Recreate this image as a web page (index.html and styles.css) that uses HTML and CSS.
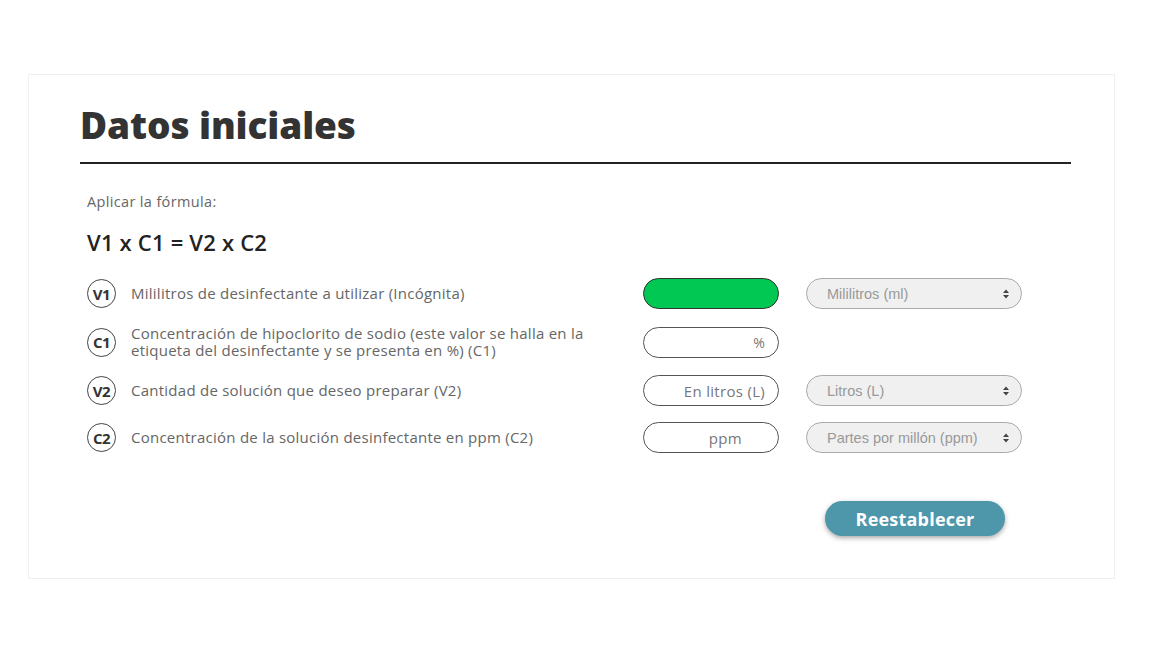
FILE: index.html
```html
<!DOCTYPE html>
<html lang="es">
<head>
<meta charset="utf-8">
<title>Datos iniciales</title>
<link rel="stylesheet" href="styles.css">
</head>
<body>
<main class="card">
  <h1 class="title">Datos iniciales</h1>
  <p class="intro">Aplicar la fórmula:</p>
  <p class="formula">V1 x C1 = V2 x C2</p>
  <div class="rows">
    <div class="row">
      <span class="badge">V1</span>
      <span class="label">Mililitros de desinfectante a utilizar (Incógnita)</span>
      <input class="field field-result" type="text" readonly>
      <select class="unit"><option>Mililitros (ml)</option></select>
    </div>
    <div class="row">
      <span class="badge">C1</span>
      <span class="label">Concentración de hipoclorito de sodio (este valor se halla en la etiqueta del desinfectante y se presenta en %) (C1)</span>
      <input class="field field-pct" type="text" placeholder="%">
      <span></span>
    </div>
    <div class="row">
      <span class="badge">V2</span>
      <span class="label">Cantidad de solución que deseo preparar (V2)</span>
      <input class="field field-l" type="text" placeholder="En litros (L)">
      <select class="unit"><option>Litros (L)</option></select>
    </div>
    <div class="row">
      <span class="badge">C2</span>
      <span class="label">Concentración de la solución desinfectante en ppm (C2)</span>
      <input class="field field-ppm" type="text" placeholder="ppm">
      <select class="unit"><option>Partes por millón (ppm)</option></select>
    </div>
  </div>
  <div class="actions">
    <button class="reset" type="button">Reestablecer</button>
  </div>
</main>
</body>
</html>
```

FILE: styles.css
```css
* { box-sizing: border-box; }
html, body { margin: 0; padding: 0; background: #fff; }
body {
  font-family: "Open Sans", "Noto Sans", sans-serif;
  color: #333;
  padding: 74px 37px 0 28px;
}
.card {
  width: 1087px;
  height: 505px;
  border: 1px solid #f0f0f0;
  padding: 24px 43px 0 51px;
}
.title {
  margin: 0;
  font-size: 37px;
  font-weight: 800;
  color: #333;
  line-height: 52px;
  padding-bottom: 11px;
  border-bottom: 2px solid #222;
  letter-spacing: -0.1px;
}
.intro {
  margin: 28px 0 0 7px;
  font-size: 14.5px;
  letter-spacing: 0.35px;
  color: #666;
  line-height: 20px;
}
.formula {
  margin: 17px 0 0 7px;
  font-size: 22px;
  font-weight: 600;
  color: #222;
  line-height: 27px;
  letter-spacing: 0.2px;
}
.rows {
  margin: 22px 0 0 7px;
  display: flex;
  flex-direction: column;
  gap: 16px;
}
.row {
  display: grid;
  grid-template-columns: 30px 498px 136px 216px;
  column-gap: 14px;
  align-items: center;
  min-height: 31px;
}
.row > .unit { margin-left: 13px; }
.badge {
  width: 29px;
  height: 29px;
  border: 1.5px solid #444;
  border-radius: 50%;
  display: flex;
  align-items: center;
  justify-content: center;
  font-size: 15px;
  font-weight: 700;
  color: #333;
  letter-spacing: -0.5px;
}
.label {
  font-size: 15px;
  letter-spacing: 0.25px;
  color: #666;
  line-height: 17px;
  max-width: 458px;
}
.field {
  width: 136px;
  height: 31px;
  border: 1.5px solid #555;
  border-radius: 16px;
  background: #fff;
  font-family: "Open Sans", "Noto Sans", sans-serif;
  font-size: 15px;
  letter-spacing: 0.3px;
  color: #666;
  text-align: right;
  outline: none;
}
.field::placeholder { color: #777; }
.field-result { background: #00c853; border-color: #333; }
.field-pct { padding-right: 13px; font-size: 14px; }
.field-l { padding-right: 13px; }
.field-ppm { padding-right: 36px; }
.unit {
  appearance: none;
  -webkit-appearance: none;
  width: 216px;
  height: 31px;
  border: 1.5px solid #aaa;
  border-radius: 16px;
  background-color: #f0f0f0;
  background-image: url("data:image/svg+xml;utf8,<svg xmlns='http://www.w3.org/2000/svg' width='8' height='10' viewBox='0 0 8 10'><path d='M4 0.5 L7 4 H1 Z M4 9.5 L7 6 H1 Z' fill='%23444'/></svg>");
  background-repeat: no-repeat;
  background-position: right 11px center;
  padding: 0 20px 0 20px;
  font-family: "Liberation Sans", Arial, sans-serif;
  font-size: 14.5px;
  color: #999;
  outline: none;
}
.actions {
  display: flex;
  justify-content: flex-end;
  margin-top: 48px;
  padding-right: 66px;
}
.reset {
  width: 180px;
  height: 35px;
  border: none;
  border-radius: 18px;
  background: #4e97ab;
  color: #fff;
  font-family: "Open Sans", "Noto Sans", sans-serif;
  font-size: 18px;
  font-weight: 700;
  letter-spacing: 0.2px;
  box-shadow: 0 2px 5px rgba(0,0,0,0.35);
  cursor: pointer;
}
```
